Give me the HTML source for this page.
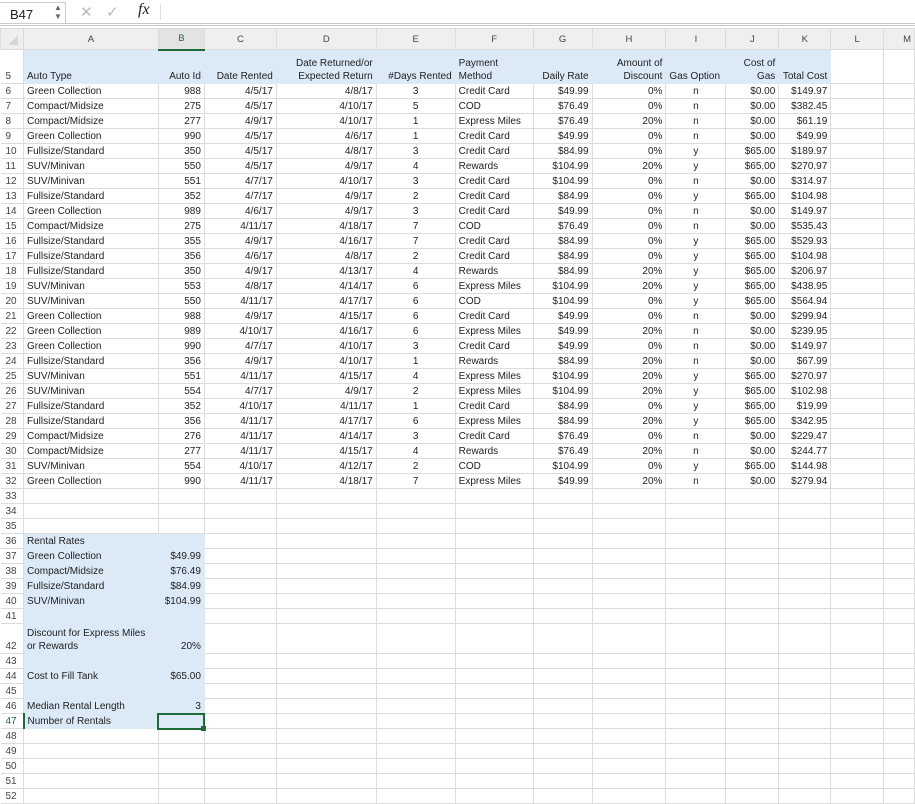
<!DOCTYPE html>
<html><head><meta charset="utf-8"><style>
*{margin:0;padding:0;box-sizing:border-box}
body{width:915px;height:796px;overflow:hidden;background:#fff;font-family:"Liberation Sans",sans-serif;font-size:10px;color:#222;position:relative}
#fb{position:absolute;left:0;top:0;width:915px;height:26px;background:#fff;border-bottom:3px double #c8c8c8}
#nb{position:absolute;left:0;top:2px;width:66px;height:22px;border:1px solid #ccc;border-left:none;font-size:13px;padding:4px 0 0 10px;color:#222}
table{position:absolute;left:0;top:28px;border-collapse:collapse;table-layout:fixed}
td{border:1px solid #dcdcdc;height:15px;padding:0 3px;white-space:nowrap;overflow:visible;line-height:13px;vertical-align:bottom}
td.r{text-align:right}td.c{text-align:center}
tr.h td{background:#efefef;text-align:center;height:21px;color:#444;font-size:9.5px;vertical-align:middle}
td.rh{background:#fff;color:#444;padding-left:5px;font-size:10px;border-left:none}
.b{background:#dce9f6;border-color:#dce9f6}
</style></head><body>
<div id="fb"><div id="nb">B47</div>
<span style="position:absolute;left:54px;top:3px;font-size:8px;color:#666;line-height:9px">▲<br>▼</span>
<span style="position:absolute;left:80px;top:3px;font-size:15px;color:#bbb">✕</span>
<span style="position:absolute;left:106px;top:3px;font-size:15px;color:#bbb">✓</span>
<span style="position:absolute;left:138px;top:1px;font-size:16px;font-style:italic;font-family:'Liberation Serif',serif">fx</span>
<span style="position:absolute;left:160px;top:4px;width:1px;height:16px;background:#ddd"></span>
</div>
<table>
<colgroup><col style="width:22px"><col style="width:135px"><col style="width:46px"><col style="width:72px"><col style="width:100px"><col style="width:79px"><col style="width:78px"><col style="width:59px"><col style="width:74px"><col style="width:60px"><col style="width:53px"><col style="width:52px"><col style="width:53px"><col style="width:31px"></colgroup>
<tr class="h"><td style="background:#efefef"><svg width="16" height="16" style="display:block"><path d="M4 14H14V4Z" fill="#d6d6d6"/></svg></td><td>A</td><td style="color:#1e6b3a;border-bottom:2px solid #1e6b3a;background:#e3e3e3">B</td><td>C</td><td>D</td><td>E</td><td>F</td><td>G</td><td>H</td><td>I</td><td>J</td><td>K</td><td>L</td><td style="text-align:right">M</td></tr>
<tr style="height:34px"><td class="rh">5</td><td class="b">Auto Type</td><td class="b r">Auto Id</td><td class="b r">Date Rented</td><td class="b r">Date Returned/or<br>Expected Return</td><td class="b r">#Days Rented</td><td class="b">Payment<br>Method</td><td class="b r">Daily Rate</td><td class="b r">Amount of<br>Discount</td><td class="b">Gas Option</td><td class="b r">Cost of<br>Gas</td><td class="b r">Total Cost</td><td></td><td></td></tr>
<tr><td class="rh">6</td><td>Green Collection</td><td class="r">988</td><td class="r">4/5/17</td><td class="r">4/8/17</td><td class="c">3</td><td>Credit Card</td><td class="r">$49.99</td><td class="r">0%</td><td class="c">n</td><td class="r">$0.00</td><td class="r">$149.97</td><td></td><td></td></tr>
<tr><td class="rh">7</td><td>Compact/Midsize</td><td class="r">275</td><td class="r">4/5/17</td><td class="r">4/10/17</td><td class="c">5</td><td>COD</td><td class="r">$76.49</td><td class="r">0%</td><td class="c">n</td><td class="r">$0.00</td><td class="r">$382.45</td><td></td><td></td></tr>
<tr><td class="rh">8</td><td>Compact/Midsize</td><td class="r">277</td><td class="r">4/9/17</td><td class="r">4/10/17</td><td class="c">1</td><td>Express Miles</td><td class="r">$76.49</td><td class="r">20%</td><td class="c">n</td><td class="r">$0.00</td><td class="r">$61.19</td><td></td><td></td></tr>
<tr><td class="rh">9</td><td>Green Collection</td><td class="r">990</td><td class="r">4/5/17</td><td class="r">4/6/17</td><td class="c">1</td><td>Credit Card</td><td class="r">$49.99</td><td class="r">0%</td><td class="c">n</td><td class="r">$0.00</td><td class="r">$49.99</td><td></td><td></td></tr>
<tr><td class="rh">10</td><td>Fullsize/Standard</td><td class="r">350</td><td class="r">4/5/17</td><td class="r">4/8/17</td><td class="c">3</td><td>Credit Card</td><td class="r">$84.99</td><td class="r">0%</td><td class="c">y</td><td class="r">$65.00</td><td class="r">$189.97</td><td></td><td></td></tr>
<tr><td class="rh">11</td><td>SUV/Minivan</td><td class="r">550</td><td class="r">4/5/17</td><td class="r">4/9/17</td><td class="c">4</td><td>Rewards</td><td class="r">$104.99</td><td class="r">20%</td><td class="c">y</td><td class="r">$65.00</td><td class="r">$270.97</td><td></td><td></td></tr>
<tr><td class="rh">12</td><td>SUV/Minivan</td><td class="r">551</td><td class="r">4/7/17</td><td class="r">4/10/17</td><td class="c">3</td><td>Credit Card</td><td class="r">$104.99</td><td class="r">0%</td><td class="c">n</td><td class="r">$0.00</td><td class="r">$314.97</td><td></td><td></td></tr>
<tr><td class="rh">13</td><td>Fullsize/Standard</td><td class="r">352</td><td class="r">4/7/17</td><td class="r">4/9/17</td><td class="c">2</td><td>Credit Card</td><td class="r">$84.99</td><td class="r">0%</td><td class="c">y</td><td class="r">$65.00</td><td class="r">$104.98</td><td></td><td></td></tr>
<tr><td class="rh">14</td><td>Green Collection</td><td class="r">989</td><td class="r">4/6/17</td><td class="r">4/9/17</td><td class="c">3</td><td>Credit Card</td><td class="r">$49.99</td><td class="r">0%</td><td class="c">n</td><td class="r">$0.00</td><td class="r">$149.97</td><td></td><td></td></tr>
<tr><td class="rh">15</td><td>Compact/Midsize</td><td class="r">275</td><td class="r">4/11/17</td><td class="r">4/18/17</td><td class="c">7</td><td>COD</td><td class="r">$76.49</td><td class="r">0%</td><td class="c">n</td><td class="r">$0.00</td><td class="r">$535.43</td><td></td><td></td></tr>
<tr><td class="rh">16</td><td>Fullsize/Standard</td><td class="r">355</td><td class="r">4/9/17</td><td class="r">4/16/17</td><td class="c">7</td><td>Credit Card</td><td class="r">$84.99</td><td class="r">0%</td><td class="c">y</td><td class="r">$65.00</td><td class="r">$529.93</td><td></td><td></td></tr>
<tr><td class="rh">17</td><td>Fullsize/Standard</td><td class="r">356</td><td class="r">4/6/17</td><td class="r">4/8/17</td><td class="c">2</td><td>Credit Card</td><td class="r">$84.99</td><td class="r">0%</td><td class="c">y</td><td class="r">$65.00</td><td class="r">$104.98</td><td></td><td></td></tr>
<tr><td class="rh">18</td><td>Fullsize/Standard</td><td class="r">350</td><td class="r">4/9/17</td><td class="r">4/13/17</td><td class="c">4</td><td>Rewards</td><td class="r">$84.99</td><td class="r">20%</td><td class="c">y</td><td class="r">$65.00</td><td class="r">$206.97</td><td></td><td></td></tr>
<tr><td class="rh">19</td><td>SUV/Minivan</td><td class="r">553</td><td class="r">4/8/17</td><td class="r">4/14/17</td><td class="c">6</td><td>Express Miles</td><td class="r">$104.99</td><td class="r">20%</td><td class="c">y</td><td class="r">$65.00</td><td class="r">$438.95</td><td></td><td></td></tr>
<tr><td class="rh">20</td><td>SUV/Minivan</td><td class="r">550</td><td class="r">4/11/17</td><td class="r">4/17/17</td><td class="c">6</td><td>COD</td><td class="r">$104.99</td><td class="r">0%</td><td class="c">y</td><td class="r">$65.00</td><td class="r">$564.94</td><td></td><td></td></tr>
<tr><td class="rh">21</td><td>Green Collection</td><td class="r">988</td><td class="r">4/9/17</td><td class="r">4/15/17</td><td class="c">6</td><td>Credit Card</td><td class="r">$49.99</td><td class="r">0%</td><td class="c">n</td><td class="r">$0.00</td><td class="r">$299.94</td><td></td><td></td></tr>
<tr><td class="rh">22</td><td>Green Collection</td><td class="r">989</td><td class="r">4/10/17</td><td class="r">4/16/17</td><td class="c">6</td><td>Express Miles</td><td class="r">$49.99</td><td class="r">20%</td><td class="c">n</td><td class="r">$0.00</td><td class="r">$239.95</td><td></td><td></td></tr>
<tr><td class="rh">23</td><td>Green Collection</td><td class="r">990</td><td class="r">4/7/17</td><td class="r">4/10/17</td><td class="c">3</td><td>Credit Card</td><td class="r">$49.99</td><td class="r">0%</td><td class="c">n</td><td class="r">$0.00</td><td class="r">$149.97</td><td></td><td></td></tr>
<tr><td class="rh">24</td><td>Fullsize/Standard</td><td class="r">356</td><td class="r">4/9/17</td><td class="r">4/10/17</td><td class="c">1</td><td>Rewards</td><td class="r">$84.99</td><td class="r">20%</td><td class="c">n</td><td class="r">$0.00</td><td class="r">$67.99</td><td></td><td></td></tr>
<tr><td class="rh">25</td><td>SUV/Minivan</td><td class="r">551</td><td class="r">4/11/17</td><td class="r">4/15/17</td><td class="c">4</td><td>Express Miles</td><td class="r">$104.99</td><td class="r">20%</td><td class="c">y</td><td class="r">$65.00</td><td class="r">$270.97</td><td></td><td></td></tr>
<tr><td class="rh">26</td><td>SUV/Minivan</td><td class="r">554</td><td class="r">4/7/17</td><td class="r">4/9/17</td><td class="c">2</td><td>Express Miles</td><td class="r">$104.99</td><td class="r">20%</td><td class="c">y</td><td class="r">$65.00</td><td class="r">$102.98</td><td></td><td></td></tr>
<tr><td class="rh">27</td><td>Fullsize/Standard</td><td class="r">352</td><td class="r">4/10/17</td><td class="r">4/11/17</td><td class="c">1</td><td>Credit Card</td><td class="r">$84.99</td><td class="r">0%</td><td class="c">y</td><td class="r">$65.00</td><td class="r">$19.99</td><td></td><td></td></tr>
<tr><td class="rh">28</td><td>Fullsize/Standard</td><td class="r">356</td><td class="r">4/11/17</td><td class="r">4/17/17</td><td class="c">6</td><td>Express Miles</td><td class="r">$84.99</td><td class="r">20%</td><td class="c">y</td><td class="r">$65.00</td><td class="r">$342.95</td><td></td><td></td></tr>
<tr><td class="rh">29</td><td>Compact/Midsize</td><td class="r">276</td><td class="r">4/11/17</td><td class="r">4/14/17</td><td class="c">3</td><td>Credit Card</td><td class="r">$76.49</td><td class="r">0%</td><td class="c">n</td><td class="r">$0.00</td><td class="r">$229.47</td><td></td><td></td></tr>
<tr><td class="rh">30</td><td>Compact/Midsize</td><td class="r">277</td><td class="r">4/11/17</td><td class="r">4/15/17</td><td class="c">4</td><td>Rewards</td><td class="r">$76.49</td><td class="r">20%</td><td class="c">n</td><td class="r">$0.00</td><td class="r">$244.77</td><td></td><td></td></tr>
<tr><td class="rh">31</td><td>SUV/Minivan</td><td class="r">554</td><td class="r">4/10/17</td><td class="r">4/12/17</td><td class="c">2</td><td>COD</td><td class="r">$104.99</td><td class="r">0%</td><td class="c">y</td><td class="r">$65.00</td><td class="r">$144.98</td><td></td><td></td></tr>
<tr><td class="rh">32</td><td>Green Collection</td><td class="r">990</td><td class="r">4/11/17</td><td class="r">4/18/17</td><td class="c">7</td><td>Express Miles</td><td class="r">$49.99</td><td class="r">20%</td><td class="c">n</td><td class="r">$0.00</td><td class="r">$279.94</td><td></td><td></td></tr>
<tr><td class="rh">33</td><td></td><td></td><td></td><td></td><td></td><td></td><td></td><td></td><td></td><td></td><td></td><td></td><td></td></tr>
<tr><td class="rh">34</td><td></td><td></td><td></td><td></td><td></td><td></td><td></td><td></td><td></td><td></td><td></td><td></td><td></td></tr>
<tr><td class="rh">35</td><td></td><td></td><td></td><td></td><td></td><td></td><td></td><td></td><td></td><td></td><td></td><td></td><td></td></tr>
<tr><td class="rh">36</td><td class="b">Rental Rates</td><td class="b"></td><td></td><td></td><td></td><td></td><td></td><td></td><td></td><td></td><td></td><td></td><td></td></tr>
<tr><td class="rh">37</td><td class="b">Green Collection</td><td class="b r">$49.99</td><td></td><td></td><td></td><td></td><td></td><td></td><td></td><td></td><td></td><td></td><td></td></tr>
<tr><td class="rh">38</td><td class="b">Compact/Midsize</td><td class="b r">$76.49</td><td></td><td></td><td></td><td></td><td></td><td></td><td></td><td></td><td></td><td></td><td></td></tr>
<tr><td class="rh">39</td><td class="b">Fullsize/Standard</td><td class="b r">$84.99</td><td></td><td></td><td></td><td></td><td></td><td></td><td></td><td></td><td></td><td></td><td></td></tr>
<tr><td class="rh">40</td><td class="b">SUV/Minivan</td><td class="b r">$104.99</td><td></td><td></td><td></td><td></td><td></td><td></td><td></td><td></td><td></td><td></td><td></td></tr>
<tr><td class="rh">41</td><td class="b"></td><td class="b"></td><td></td><td></td><td></td><td></td><td></td><td></td><td></td><td></td><td></td><td></td><td></td></tr>
<tr style="height:30px"><td class="rh">42</td><td class="b">Discount for Express Miles<br>or Rewards</td><td class="b r">20%</td><td></td><td></td><td></td><td></td><td></td><td></td><td></td><td></td><td></td><td></td><td></td></tr>
<tr><td class="rh">43</td><td class="b"></td><td class="b"></td><td></td><td></td><td></td><td></td><td></td><td></td><td></td><td></td><td></td><td></td><td></td></tr>
<tr><td class="rh">44</td><td class="b">Cost to Fill Tank</td><td class="b r">$65.00</td><td></td><td></td><td></td><td></td><td></td><td></td><td></td><td></td><td></td><td></td><td></td></tr>
<tr><td class="rh">45</td><td class="b"></td><td class="b"></td><td></td><td></td><td></td><td></td><td></td><td></td><td></td><td></td><td></td><td></td><td></td></tr>
<tr><td class="rh">46</td><td class="b">Median Rental Length</td><td class="b r">3</td><td></td><td></td><td></td><td></td><td></td><td></td><td></td><td></td><td></td><td></td><td></td></tr>
<tr><td class="rh" style="color:#1e6b3a;border-right:2px solid #1e6b3a">47</td><td class="b">Number of Rentals</td><td class="b" style="border:2px solid #1e6b3a"></td><td></td><td></td><td></td><td></td><td></td><td></td><td></td><td></td><td></td><td></td><td></td></tr>
<tr><td class="rh">48</td><td></td><td></td><td></td><td></td><td></td><td></td><td></td><td></td><td></td><td></td><td></td><td></td><td></td></tr>
<tr><td class="rh">49</td><td></td><td></td><td></td><td></td><td></td><td></td><td></td><td></td><td></td><td></td><td></td><td></td><td></td></tr>
<tr><td class="rh">50</td><td></td><td></td><td></td><td></td><td></td><td></td><td></td><td></td><td></td><td></td><td></td><td></td><td></td></tr>
<tr><td class="rh">51</td><td></td><td></td><td></td><td></td><td></td><td></td><td></td><td></td><td></td><td></td><td></td><td></td><td></td></tr>
<tr><td class="rh">52</td><td></td><td></td><td></td><td></td><td></td><td></td><td></td><td></td><td></td><td></td><td></td><td></td><td></td></tr>
</table>
<div style="position:absolute;left:201px;top:726px;width:5px;height:5px;background:#1e6b3a"></div>
</body></html>
